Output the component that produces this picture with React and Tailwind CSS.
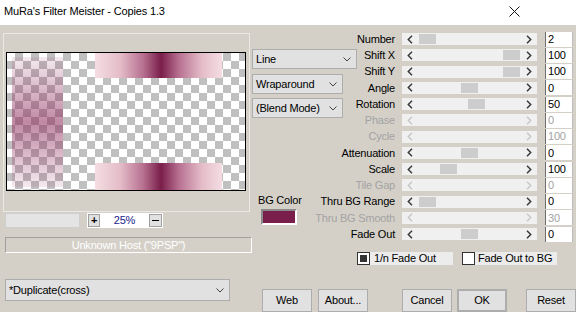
import React from 'react';

const rows = [
  { label: 'Number', value: '2', thumb: 17, row: 'row-start-1' },
  { label: 'Shift X', value: '100', thumb: 101, row: 'row-start-2' },
  { label: 'Shift Y', value: '100', thumb: 101, row: 'row-start-3' },
  { label: 'Angle', value: '0', thumb: 59, row: 'row-start-4' },
  { label: 'Rotation', value: '50', thumb: 66, row: 'row-start-5' },
  { label: 'Phase', value: '0', disabled: true, row: 'row-start-6' },
  { label: 'Cycle', value: '100', disabled: true, row: 'row-start-7' },
  { label: 'Attenuation', value: '0', thumb: 59, row: 'row-start-8' },
  { label: 'Scale', value: '100', thumb: 38, row: 'row-start-9' },
  { label: 'Tile Gap', value: '0', disabled: true, row: 'row-start-10' },
  { label: 'Thru BG Range', value: '0', thumb: 17, row: 'row-start-11' },
  { label: 'Thru BG Smooth', value: '30', disabled: true, row: 'row-start-12' },
  { label: 'Fade Out', value: '0', thumb: 59, row: 'row-start-13' },
];

const Chevron = () => (
  <svg width="8" height="5" viewBox="0 0 8 5">
    <path d="M0.5 0.5 L4 4 L7.5 0.5" fill="none" stroke="#444" strokeWidth="1" />
  </svg>
);

const Select = ({ text, className }) => (
  <div className={`h-[20px] bg-[#e1e1e1] border border-[#adadad] flex items-center justify-between pl-[3px] pr-[5px] ${className}`}>
    <span>{text}</span>
    <Chevron />
  </div>
);

const Bar = ({ thumb, disabled }) => {
  const c = disabled ? '#c8c8c8' : '#3a3a3a';
  return (
    <div className="relative h-[12px] bg-[#f0f0f0] flex items-center justify-between px-[5px]">
      <svg width="6" height="9" viewBox="0 0 6 9">
        <path d="M5 0.8 L1.3 4.5 L5 8.2" fill="none" stroke={c} strokeWidth="1.5" />
      </svg>
      {thumb != null && (
        <div className="absolute top-[1px] bottom-[1px] w-[17px] bg-[#cdcdcd]" style={{ left: thumb }} />
      )}
      <svg width="6" height="9" viewBox="0 0 6 9">
        <path d="M1 0.8 L4.7 4.5 L1 8.2" fill="none" stroke={c} strokeWidth="1.5" />
      </svg>
    </div>
  );
};

const Button = ({ children, className = '' }) => (
  <div className={`w-[50px] h-[23px] flex items-center justify-center bg-[#e1e1e1] border border-[#adadad] ${className}`}>
    {children}
  </div>
);

export default function App() {
  return (
    <div className="w-[576px] h-[312px] overflow-hidden bg-[#d4d0c8] text-black text-[11px] tracking-[-0.2px] font-['Liberation_Sans',Arial,sans-serif]">
      {/* title bar */}
      <div className="h-[25px] bg-white flex items-center justify-between pl-[4px]">
        <span className="text-[11px] tracking-[-0.15px] -mt-[3px]">MuRa's Filter Meister - Copies 1.3</span>
        <svg width="11" height="11" viewBox="0 0 11 11" className="mr-[56px] -mt-[3px]">
          <path d="M0.5 0.5 L10.5 10.5 M10.5 0.5 L0.5 10.5" stroke="#111" strokeWidth="1" />
        </svg>
      </div>

      <div className="flex">
        {/* left side */}
        <div className="w-[252px] shrink-0 pl-[3px] pt-[8px] flex flex-col">
          <div className="w-[247px] h-[179px] border border-[#ebe9e4] pt-[18px] pl-[2px]">
            <div className="relative w-[240px] h-[139px] border border-black overflow-hidden bg-[conic-gradient(#c0c0c0_25%,#ffffff_0_50%,#c0c0c0_0_75%,#ffffff_0)] bg-[length:16px_16px]">
              <div className="absolute left-[5px] top-[4px] w-[51px] h-[130px] bg-[linear-gradient(to_bottom,rgba(150,50,95,0.1),rgba(140,40,90,0.55)_50%,rgba(150,50,95,0.1))]" />
              <div className="absolute left-[88px] top-0 w-[127px] h-[25px] bg-[linear-gradient(to_right,#f4dde2,#e4bcc8_20%,#b77090_38%,#7a1e4a_52%,#b77090_66%,#e4bcc8_84%,#f4dde2)]" />
              <div className="absolute left-[88px] bottom-0 w-[127px] h-[27px] bg-[linear-gradient(to_right,#f4dde2,#e4bcc8_20%,#b77090_38%,#7a1e4a_52%,#b77090_66%,#e4bcc8_84%,#f4dde2)]" />
            </div>
          </div>

          <div className="mt-[1px] pl-[2px] flex items-center">
            <div className="w-[75px] h-[15px] bg-[#e4e4e4] border border-[#cfcfcf]" />
            <div className="ml-[7px] w-[76px] h-[15px] bg-white flex items-center justify-between px-[1px]">
              <div className="w-[12px] h-[13px] bg-[#e1e1e1] border border-[#a0a0a0] flex items-center justify-center font-bold leading-none">+</div>
              <span className="text-[#1a1a8a]">25%</span>
              <div className="w-[13px] h-[13px] bg-[#e1e1e1] border border-[#a0a0a0] flex items-center justify-center">
                <div className="w-[7px] h-[1px] bg-black" />
              </div>
            </div>
          </div>

          <div className="mt-[9px] ml-[2px] w-[247px] h-[16px] border border-t-[#a0a0a0] border-l-[#a0a0a0] border-r-white border-b-white text-white flex items-center justify-center">
            Unknown Host ("9PSP")
          </div>

          <Select text="*Duplicate(cross)" className="mt-[26px] ml-[2px] w-[225px] h-[22px]" />
        </div>

        {/* right side */}
        <div className="flex flex-col pt-[6px]">
          <div className="grid grid-cols-[143px_135px_29px] grid-rows-[repeat(13,16.25px)] gap-x-[7px]">
            {rows.map((r) => (
              <React.Fragment key={r.label}>
                <div className={`${r.row} col-start-1 flex items-center justify-end ${r.disabled ? 'text-[#a3a3a3]' : ''}`}>
                  {r.label}
                </div>
                <div className={`${r.row} col-start-2 self-center`}>
                  <Bar thumb={r.thumb} disabled={r.disabled} />
                </div>
                <div className={`${r.row} col-start-3 ml-[1px] h-[15px] self-center bg-white border-l border-l-[#6e6e6e] border-r border-r-[#bdbdbd] pl-[2px] flex items-center ${r.disabled ? 'text-[#a3a3a3]' : ''}`}>
                  {r.value}
                </div>
              </React.Fragment>
            ))}
            <Select text="Line" className="col-start-1 row-start-2 row-span-2 self-start justify-self-start mt-[1.75px] w-[105px]" />
            <Select text="Wraparound" className="col-start-1 row-start-3 row-span-2 self-start justify-self-start mt-[10.5px] w-[91px]" />
            <Select text="(Blend Mode)" className="col-start-1 row-start-5 row-span-2 self-start justify-self-start mt-[2px] w-[91px]" />
            <div className="col-start-1 row-start-11 self-start justify-self-start ml-[6px] leading-[12px]">BG Color</div>
            <div className="col-start-1 row-start-12 self-start justify-self-start ml-[9px] -mt-[1px] w-[36px] h-[16px] bg-[#7a1f4b] border-2 border-t-[#8a8a8a] border-l-[#8a8a8a] border-r-white border-b-white" />
          </div>

          <div className="mt-[9.75px] pl-[105px] flex items-center">
            <div className="w-[13px] h-[13px] bg-white border border-[#333] flex items-center justify-center">
              <div className="w-[7px] h-[7px] bg-[#333]" />
            </div>
            <div className="w-[83px] h-[13px] bg-[#ececec] pl-[4px] flex items-center">1/n Fade Out</div>
            <div className="ml-[9px] w-[13px] h-[13px] bg-white border border-[#333]" />
            <div className="w-[82px] h-[13px] bg-[#ececec] pl-[3px] flex items-center">Fade Out to BG</div>
          </div>

          <div className="mt-[24px] pl-[10px] flex">
            <Button>Web</Button>
            <Button className="ml-[6px]">About...</Button>
            <Button className="ml-[34px]">Cancel</Button>
            <Button className="ml-[5px] border-2 border-[#0078d7]">OK</Button>
            <Button className="ml-[19px]">Reset</Button>
          </div>
        </div>
      </div>
    </div>
  );
}
